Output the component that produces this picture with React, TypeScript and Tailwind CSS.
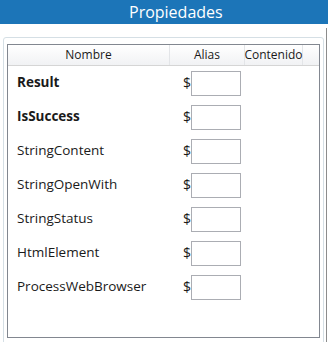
const ROWS = [
  { name: 'Result', bold: true },
  { name: 'IsSuccess', bold: true },
  { name: 'StringContent', bold: false },
  { name: 'StringOpenWith', bold: false },
  { name: 'StringStatus', bold: false },
  { name: 'HtmlElement', bold: false },
  { name: 'ProcessWebBrowser', bold: false },
];

export default function App() {
  return (
    <div
      className="relative h-[342px] w-[328px] overflow-hidden bg-white text-[#1a1a1a]"
      style={{ fontFamily: '"Open Sans", "Noto Sans", sans-serif' }}
    >
      <div className="flex h-[24px] items-center bg-[#1c75b8] pl-[129px] text-[16px] leading-none text-white">
        Propiedades
      </div>

      <div className="absolute top-[28px] right-[1px] bottom-0 w-px bg-[#8c8c8c]" />

      <div className="mt-[13px] ml-[3px] h-[310px] w-[321px] rounded-[3px] border border-[#d5dfe5] pt-[6px] pr-[4px] pl-[3px]">
        <div className="flex h-[294px] w-[313px] flex-col border border-[#828790] bg-white">
          <div className="flex h-[21px] border-b border-[#d5d5d5] bg-gradient-to-b from-white to-[#f1f2f4] text-[12px] leading-none">
            <div className="flex w-[162px] items-center justify-center border-r border-[#e3e5e8]">
              Nombre
            </div>
            <div className="flex w-[75px] items-center justify-center border-r border-[#e3e5e8]">
              Alias
            </div>
            <div className="flex w-[58px] items-center justify-center border-r border-[#e3e5e8]">
              Contenido
            </div>
            <div className="flex-1" />
          </div>

          {ROWS.map((row) => (
            <div key={row.name} className="flex h-[34px] items-center">
              <div
                className={`w-[162px] pl-[9px] text-[13.5px] leading-none ${
                  row.bold ? 'font-bold' : ''
                }`}
              >
                {row.name}
              </div>
              <div className="flex items-center pl-[13px]">
                <span className="w-[8px] text-[14px] leading-none">$</span>
                <div className="h-[25px] w-[50px] border border-[#abadb3] bg-white" />
              </div>
            </div>
          ))}
        </div>
      </div>
    </div>
  );
}
